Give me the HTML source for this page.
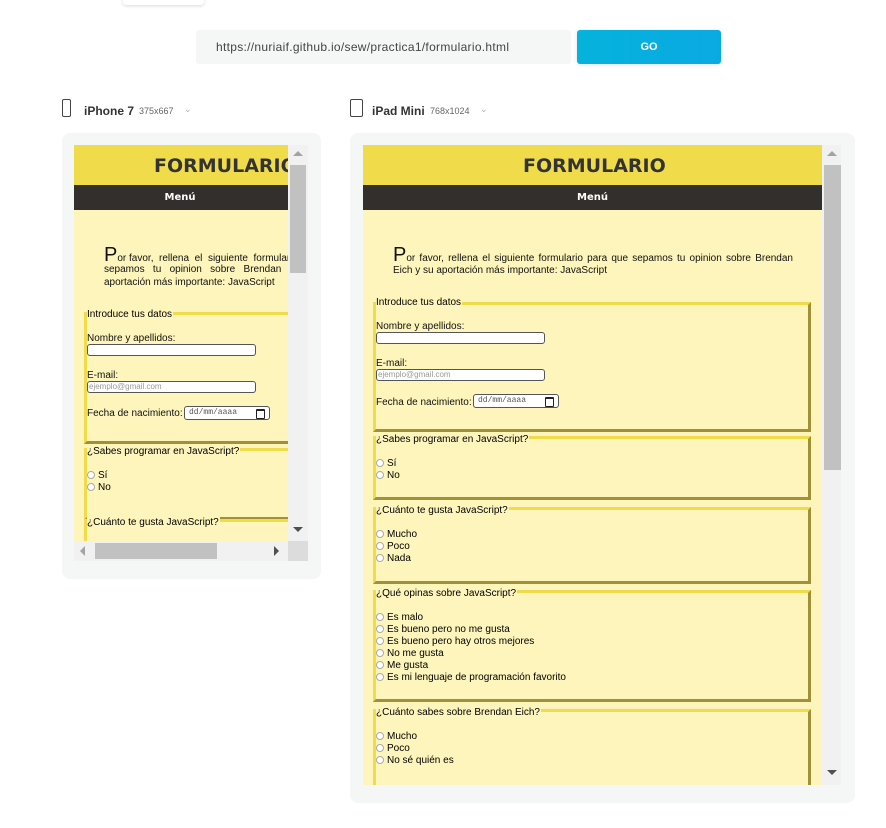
<!DOCTYPE html>
<html><head><meta charset="utf-8">
<style>
*{box-sizing:border-box;margin:0;padding:0}
body{width:886px;height:828px;background:#fff;position:relative;overflow:hidden;font-family:"Liberation Sans",sans-serif;color:#000}
.a{position:absolute}
.card{position:absolute;background:#f5f6f6;border-radius:8px}
.vp{position:absolute;overflow:hidden;background:#fdf5bb}
.hdr{position:absolute;left:0;top:0;height:40px;background:#f0dc4a}
.ttl{position:absolute;top:10px;font-weight:bold;font-size:19px;color:#333;font-family:"DejaVu Sans","Liberation Sans",sans-serif;letter-spacing:0}
.menu{position:absolute;left:0;top:40px;height:25px;background:#332f2c;color:#fff;font-weight:bold;font-size:10px;font-family:"DejaVu Sans",sans-serif;text-align:center;line-height:26px}
.t{position:absolute;font-size:10px;line-height:12px;white-space:nowrap;color:#111;margin-top:2px}
.fs{position:absolute;border-top:3px solid #f0dc4a;border-left:3px solid #f0dc4a;border-right:3px solid #a09038;border-bottom:3px solid #a09038}
.lg{position:absolute;font-size:10px;line-height:12px;background:#fdf5bb;white-space:nowrap;padding-right:1px;margin-top:2px}
.in{position:absolute;height:12px;border:1px solid #555;border-radius:3px;background:#fff;font-size:8px;line-height:10px;color:#999;padding-left:1px}
.dt{position:absolute;height:14px;width:86px;border:1px solid #555;border-radius:3px;background:#fff;font-family:"Liberation Mono",monospace;font-size:8px;line-height:12px;color:#555;padding-left:4px}
.dt:after{content:"";position:absolute;right:4px;top:2px;width:7px;height:7px;border:1px solid #222;border-top-width:2px;border-radius:1px}
.r{position:absolute;font-size:10px;line-height:12px;height:12px;white-space:nowrap;padding-left:11px;margin-top:2px}
.r:before{content:"";position:absolute;left:0;top:1px;width:8px;height:8px;border:1px solid #aaa;border-radius:50%;background:#fff;box-sizing:border-box;display:block}
.sb{position:absolute;background:#f1f1f1}
.th{position:absolute;background:#c1c1c1}
</style></head><body>

<div class="a" style="left:123px;top:-4px;width:81px;height:9px;background:#fff;border-radius:3px;box-shadow:0 1px 3px rgba(0,0,0,.15)"></div>
<div class="a" style="left:196px;top:30px;width:375px;height:34px;background:#f5f6f6;border-radius:3px;font-size:12px;color:#444;line-height:34px;padding-left:20px;letter-spacing:.3px">https://nuriaif.github.io/sew/practica1/formulario.html</div>
<div class="a" style="left:577px;top:30px;width:144px;height:34px;background:linear-gradient(90deg,#05b3dc,#0aa9e3);border-radius:3px;color:#fff;font-weight:bold;font-size:11px;text-align:center;line-height:34px;box-shadow:0 1px 4px rgba(0,0,0,.12)">GO</div>

<div class="a" style="left:62px;top:99px;width:9px;height:18px;border:1.3px solid #444;border-radius:2px"></div>
<div class="a" style="left:84px;top:104px;font-size:12px;font-weight:bold;color:#333">iPhone 7</div>
<div class="a" style="left:139px;top:106px;font-size:9px;color:#666">375x667</div>
<div class="a" style="left:184px;top:104px;font-size:9px;color:#aaa">⌄</div>
<div class="a" style="left:350px;top:99px;width:13px;height:18px;border:1.3px solid #444;border-radius:2px"></div>
<div class="a" style="left:372px;top:104px;font-size:12px;font-weight:bold;color:#333">iPad Mini</div>
<div class="a" style="left:430px;top:106px;font-size:9px;color:#666">768x1024</div>
<div class="a" style="left:480px;top:104px;font-size:9px;color:#aaa">⌄</div>

<!-- iPhone -->
<div class="card" style="left:62px;top:133px;width:259px;height:446px"></div>
<div class="vp" style="left:74px;top:145px;width:234px;height:416px">
  <div class="hdr" style="width:234px"></div>
  <div class="ttl" style="left:80px">FORMULARIO</div>
  <div class="menu" style="width:234px;padding-right:22px">Menú</div>
  <div class="t" style="left:30px;top:99px;font-size:10px"><span style="font-size:20px;line-height:18px">P</span>or favor,&nbsp; rellena&nbsp; el&nbsp; siguiente&nbsp; formulario</div>
  <div class="t" style="left:30px;top:117px">sepamos&nbsp;&nbsp; tu&nbsp;&nbsp; opinion&nbsp;&nbsp; sobre&nbsp;&nbsp; Brendan&nbsp;&nbsp; Eich</div>
  <div class="t" style="left:30px;top:130px">aportación más importante: JavaScript</div>

  <div class="fs" style="left:10px;top:167px;width:300px;height:132px"></div>
  <div class="lg" style="left:13px;top:162px">Introduce tus datos</div>
  <div class="t" style="left:13px;top:186px">Nombre y apellidos:</div>
  <div class="in" style="left:13px;top:199px;width:169px"></div>
  <div class="t" style="left:13px;top:223px">E-mail:</div>
  <div class="in" style="left:13px;top:236px;width:169px">ejemplo@gmail.com</div>
  <div class="t" style="left:13px;top:261px">Fecha de nacimiento:</div>
  <div class="dt" style="left:110px;top:261px">dd/mm/aaaa</div>

  <div class="fs" style="left:10px;top:303px;width:300px;height:72px"></div>
  <div class="lg" style="left:13px;top:299px">¿Sabes programar en JavaScript?</div>
  <div class="r" style="left:13px;top:323px">Sí</div>
  <div class="r" style="left:13px;top:335px">No</div>

  <div class="fs" style="left:10px;top:374px;width:300px;height:100px"></div>
  <div class="lg" style="left:13px;top:370px">¿Cuánto te gusta JavaScript?</div>

  <div class="sb" style="left:214px;top:0;width:20px;height:396px"></div>
  <div class="th" style="left:216px;top:20px;width:16px;height:108px"></div>
  <div class="a" style="left:219px;top:6px;border:5px solid transparent;border-bottom-color:#a3a3a3;border-top:0"></div>
  <div class="a" style="left:219px;top:382px;border:5px solid transparent;border-top-color:#505050;border-bottom:0"></div>
  <div class="sb" style="left:0;top:396px;width:214px;height:20px"></div>
  <div class="th" style="left:21px;top:398px;width:122px;height:16px"></div>
  <div class="a" style="left:6px;top:401px;border:5px solid transparent;border-right-color:#a3a3a3;border-left:0"></div>
  <div class="a" style="left:200px;top:401px;border:5px solid transparent;border-left-color:#505050;border-right:0"></div>
  <div class="a" style="left:214px;top:396px;width:20px;height:20px;background:#dcdcdc"></div>
</div>

<!-- iPad -->
<div class="card" style="left:350px;top:133px;width:505px;height:670px"></div>
<div class="vp" style="left:363px;top:145px;width:478px;height:640px">
  <div class="hdr" style="width:459px"></div>
  <div class="ttl" style="left:160px">FORMULARIO</div>
  <div class="menu" style="width:459px">Menú</div>
  <div class="t" style="left:30px;top:99px;width:400px;text-align:justify;white-space:normal;text-align-last:justify"><span style="font-size:20px;line-height:18px">P</span>or favor, rellena el siguiente formulario para que sepamos tu opinion sobre Brendan</div>
  <div class="t" style="left:30px;top:118px">Eich y su aportación más importante: JavaScript</div>

  <div class="fs" style="left:10px;top:157px;width:438px;height:130px"></div>
  <div class="lg" style="left:13px;top:150px">Introduce tus datos</div>
  <div class="t" style="left:13px;top:174px">Nombre y apellidos:</div>
  <div class="in" style="left:13px;top:187px;width:169px"></div>
  <div class="t" style="left:13px;top:211px">E-mail:</div>
  <div class="in" style="left:13px;top:224px;width:169px">ejemplo@gmail.com</div>
  <div class="t" style="left:13px;top:250px">Fecha de nacimiento:</div>
  <div class="dt" style="left:110px;top:249px">dd/mm/aaaa</div>

  <div class="fs" style="left:10px;top:291px;width:438px;height:64px"></div>
  <div class="lg" style="left:13px;top:287px">¿Sabes programar en JavaScript?</div>
  <div class="r" style="left:13px;top:311px">Sí</div>
  <div class="r" style="left:13px;top:323px">No</div>

  <div class="fs" style="left:10px;top:362px;width:438px;height:77px"></div>
  <div class="lg" style="left:13px;top:358px">¿Cuánto te gusta JavaScript?</div>
  <div class="r" style="left:13px;top:382px">Mucho</div>
  <div class="r" style="left:13px;top:394px">Poco</div>
  <div class="r" style="left:13px;top:406px">Nada</div>

  <div class="fs" style="left:10px;top:445px;width:438px;height:112px"></div>
  <div class="lg" style="left:13px;top:441px">¿Qué opinas sobre JavaScript?</div>
  <div class="r" style="left:13px;top:465px">Es malo</div>
  <div class="r" style="left:13px;top:477px">Es bueno pero no me gusta</div>
  <div class="r" style="left:13px;top:489px">Es bueno pero hay otros mejores</div>
  <div class="r" style="left:13px;top:501px">No me gusta</div>
  <div class="r" style="left:13px;top:513px">Me gusta</div>
  <div class="r" style="left:13px;top:525px">Es mi lenguaje de programación favorito</div>

  <div class="fs" style="left:10px;top:564px;width:438px;height:120px"></div>
  <div class="lg" style="left:13px;top:560px">¿Cuánto sabes sobre Brendan Eich?</div>
  <div class="r" style="left:13px;top:584px">Mucho</div>
  <div class="r" style="left:13px;top:596px">Poco</div>
  <div class="r" style="left:13px;top:608px">No sé quién es</div>

  <div class="sb" style="left:459px;top:0;width:19px;height:640px"></div>
  <div class="th" style="left:461px;top:20px;width:17px;height:305px"></div>
  <div class="a" style="left:464px;top:6px;border:5px solid transparent;border-bottom-color:#a3a3a3;border-top:0"></div>
  <div class="a" style="left:464px;top:625px;border:5px solid transparent;border-top-color:#505050;border-bottom:0"></div>
</div>
</body></html>
